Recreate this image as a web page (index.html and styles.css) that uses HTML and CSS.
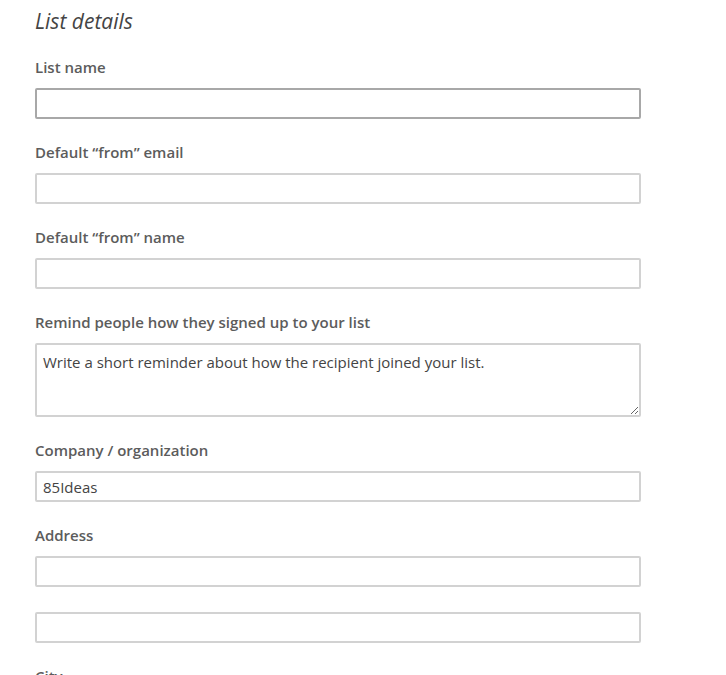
FILE: index.html
```html
<!DOCTYPE html>
<html>
<head>
<meta charset="utf-8">
<link rel="stylesheet" href="styles.css">
</head>
<body>
<form class="form">
  <h2 class="title">List details</h2>
  <div class="field">
    <label class="label">List name</label>
    <input class="input input-focus" type="text">
  </div>
  <div class="field">
    <label class="label">Default “from” email</label>
    <input class="input" type="text">
  </div>
  <div class="field">
    <label class="label">Default “from” name</label>
    <input class="input" type="text">
  </div>
  <div class="field">
    <label class="label">Remind people how they signed up to your list</label>
    <textarea class="textarea">Write a short reminder about how the recipient joined your list.</textarea>
  </div>
  <div class="field">
    <label class="label">Company / organization</label>
    <input class="input" type="text" value="85Ideas">
  </div>
  <div class="field">
    <label class="label">Address</label>
    <input class="input" type="text">
    <input class="input input-second" type="text">
  </div>
  <div class="field">
    <label class="label">City</label>
    <input class="input" type="text">
  </div>
</form>
</body>
</html>
```
FILE: styles.css
```css
html, body {
  margin: 0;
  padding: 0;
  background: #ffffff;
}
body {
  font-family: "Open Sans", "Noto Sans", sans-serif;
  color: #444444;
  overflow: hidden;
  height: 675px;
}
.form {
  width: 606px;
  padding: 7px 0 0 35px;
  display: flex;
  flex-direction: column;
}
.title {
  margin: 0 0 22px 0;
  font-size: 21px;
  font-weight: 400;
  font-style: italic;
  line-height: 28px;
  color: #444444;
}
.field {
  display: flex;
  flex-direction: column;
  margin-bottom: 23px;
}
.label {
  font-size: 15px;
  font-weight: 600;
  line-height: 20px;
  color: #5c5c5c;
  margin-bottom: 11px;
}
.input, .textarea {
  box-sizing: border-box;
  width: 606px;
  height: 31px;
  margin: 0;
  border: 2px solid #d2d2d2;
  border-radius: 2px;
  padding: 0 6px;
  font-family: "Open Sans", "Noto Sans", sans-serif;
  font-size: 15px;
  color: #444444;
  background: #ffffff;
  outline: none;
}
.input-focus {
  border-color: #a8a8a8;
}
.input-second {
  margin-top: 25px;
}
.textarea {
  height: 74px;
  padding: 7px 6px;
  line-height: 20px;
  resize: vertical;
}
```
